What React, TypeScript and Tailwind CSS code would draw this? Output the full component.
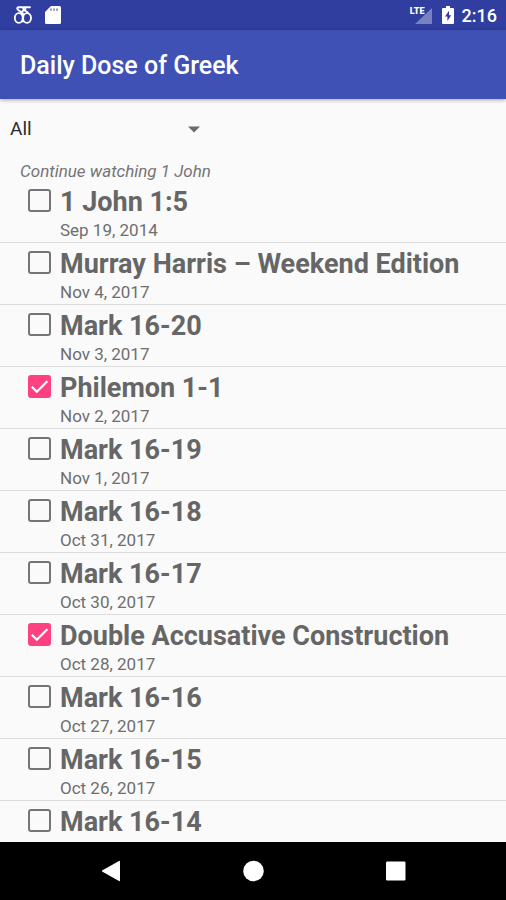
import { useState } from 'react';

type Lesson = {
  id: string;
  title: string;
  date: string;
  watched?: boolean;
};

const resumeLesson: Lesson = { id: 'john-1-5', title: '1 John 1:5', date: 'Sep 19, 2014' };

const lessons: Lesson[] = [
  { id: 'murray-harris', title: 'Murray Harris – Weekend Edition', date: 'Nov 4, 2017' },
  { id: 'mark-16-20', title: 'Mark 16-20', date: 'Nov 3, 2017' },
  { id: 'philemon-1-1', title: 'Philemon 1-1', date: 'Nov 2, 2017', watched: true },
  { id: 'mark-16-19', title: 'Mark 16-19', date: 'Nov 1, 2017' },
  { id: 'mark-16-18', title: 'Mark 16-18', date: 'Oct 31, 2017' },
  { id: 'mark-16-17', title: 'Mark 16-17', date: 'Oct 30, 2017' },
  { id: 'double-accusative', title: 'Double Accusative Construction', date: 'Oct 28, 2017', watched: true },
  { id: 'mark-16-16', title: 'Mark 16-16', date: 'Oct 27, 2017' },
  { id: 'mark-16-15', title: 'Mark 16-15', date: 'Oct 26, 2017' },
  { id: 'mark-16-14', title: 'Mark 16-14', date: '' },
];

function StatusBar() {
  return (
    <div className="flex h-[30px] shrink-0 items-center bg-[#303f9f] pl-[13px] pr-[9px] text-white">
      {/* Twin deltas */}
      <svg className="h-5 w-5" viewBox="0 0 20 20" fill="none" stroke="currentColor" strokeWidth="1.9" strokeLinecap="round" strokeLinejoin="round">
        <path d="M10 2.300H5.500c-1.800.4-1.600 2 0 2.900l3.300 2.300c1.200 1 1.700 2.500 1.500 5" />
        <path d="M17 2.300h-5.500c-1.800.4-1.600 2 0 2.900l3.300 2.300" />
        <path d="M12.500 3.800L8 7.500" />
        <ellipse cx="5.800" cy="13" rx="4" ry="4.900" />
        <ellipse cx="14" cy="13" rx="4" ry="4.900" />
        <path d="M9.900 8.500v8" />
      </svg>
      <svg className="ml-3 h-5 w-4" viewBox="0 0 16 20" fill="currentColor">
        <path d="M6 1h8.500A1.500 1.500 0 0 1 16 2.500v15a1.500 1.500 0 0 1-1.500 1.500h-13A1.500 1.500 0 0 1 0 17.500V7z" />
        <path d="M6 3.500v2.200M9 3.500v2.200M12 3.500v2.200" stroke="#303f9f" strokeOpacity="0.7" strokeWidth="1.500" />
      </svg>
      <div className="ml-auto flex items-start">
        <span className="text-[9px] font-black leading-[10px]">LTE</span>
        <svg className="-ml-2.5 mt-0.5 h-4 w-[17px]" viewBox="0 0 17 16">
          <path d="M17 0v16H0z" fill="#ffffff" fillOpacity="0.35" />
        </svg>
      </div>
      <svg className="ml-2.5 h-[18px] w-3" viewBox="0 0 12 18" fill="currentColor">
        <path fillRule="evenodd" d="M4 0h4v2h3a1 1 0 0 1 1 1v14a1 1 0 0 1-1 1H1a1 1 0 0 1-1-1V3a1 1 0 0 1 1-1h3zM7 4.800l-4 5.700H5.400V15l3.800-5.700H7z" />
      </svg>
      <span className="ml-2 pt-0.5 text-lg font-medium leading-5">2:16</span>
    </div>
  );
}

function LessonRow({ lesson }: { lesson: Lesson }) {
  const [watched, setWatched] = useState(Boolean(lesson.watched));

  return (
    <li className="h-[62px] shrink-0 border-b border-[#dcdcdc] pl-7 text-[#666666]">
      <label htmlFor={lesson.id} className="flex h-9 items-center gap-[9px] pt-[3px]">
        <span className="relative flex shrink-0">
          <input
            id={lesson.id}
            type="checkbox"
            checked={watched}
            onChange={(e) => setWatched(e.target.checked)}
            className="h-[23px] w-[23px] appearance-none rounded-[3px] border-2 border-[#757575] checked:border-[#ff4081] checked:bg-[#ff4081]"
          />
          {watched && (
            <svg className="pointer-events-none absolute inset-0 h-[23px] w-[23px]" viewBox="0 0 23 23" fill="none" stroke="#ffffff" strokeWidth="2.200">
              <path d="M3.800 11.800l5 5L19.300 6.200" />
            </svg>
          )}
        </span>
        <span className="whitespace-nowrap pt-0.5 text-[27px] font-bold leading-8">{lesson.title}</span>
      </label>
      <p className="pl-8 text-[17px] leading-[26px] text-[#6e6e6e]">{lesson.date}</p>
    </li>
  );
}

export default function App() {
  return (
    <div className="flex h-screen flex-col overflow-hidden bg-[#fafafa] font-['Roboto',sans-serif]">
      <StatusBar />

      <header className="z-10 flex h-[69px] shrink-0 items-center bg-[#3f51b5] px-5 pt-0.5 shadow-[0_1px_4px_rgba(0,0,0,0.35)]">
        <h1 className="text-[25px] font-medium leading-8 text-white">Daily Dose of Greek</h1>
      </header>

      <main className="flex min-h-0 flex-1 flex-col overflow-hidden">
        {/* Category filter */}
        <div className="relative mt-3 flex h-9 w-[210px] shrink-0 items-center">
          <select aria-label="Category" className="h-9 w-full appearance-none bg-transparent pl-2.5 text-[19px] text-[#2b2b2b]">
            <option>All</option>
          </select>
          <svg className="pointer-events-none absolute right-2.5 h-[7px] w-3" viewBox="0 0 12 7">
            <path d="M0 0.500h12l-6 6z" fill="#6b6b6b" />
          </svg>
        </div>

        <p className="mt-3 shrink-0 pl-5 text-[17px] italic leading-6 text-[#757575]">Continue watching 1 John</p>

        <ul className="-mt-0.5 flex min-h-0 flex-col overflow-hidden">
          <LessonRow lesson={resumeLesson} />
          {lessons.map((lesson) => (
            <LessonRow key={lesson.id} lesson={lesson} />
          ))}
        </ul>
      </main>

      {/* System navigation */}
      <nav className="grid h-[58px] shrink-0 grid-cols-3 bg-black px-10 text-white">
        <button aria-label="Back" className="flex items-center justify-center">
          <svg className="h-[22px] w-[22px]" viewBox="0 0 22 22" fill="currentColor">
            <path d="M20 1.500v19a.7.7 0 0 1-1 .5L2.500 11.800a.9.9 0 0 1 0-1.600L19 1a.7.7 0 0 1 1 .5z" />
          </svg>
        </button>
        <button aria-label="Home" className="flex items-center justify-center">
          <svg className="h-[22px] w-[22px]" viewBox="0 0 22 22" fill="currentColor">
            <circle cx="11.500" cy="11" r="10.300" />
          </svg>
        </button>
        <button aria-label="Recent apps" className="flex items-center justify-center">
          <svg className="h-[22px] w-[22px]" viewBox="0 0 22 22" fill="currentColor">
            <rect x="2" y="1.500" width="19.500" height="19" rx="1.200" />
          </svg>
        </button>
      </nav>
    </div>
  );
}
